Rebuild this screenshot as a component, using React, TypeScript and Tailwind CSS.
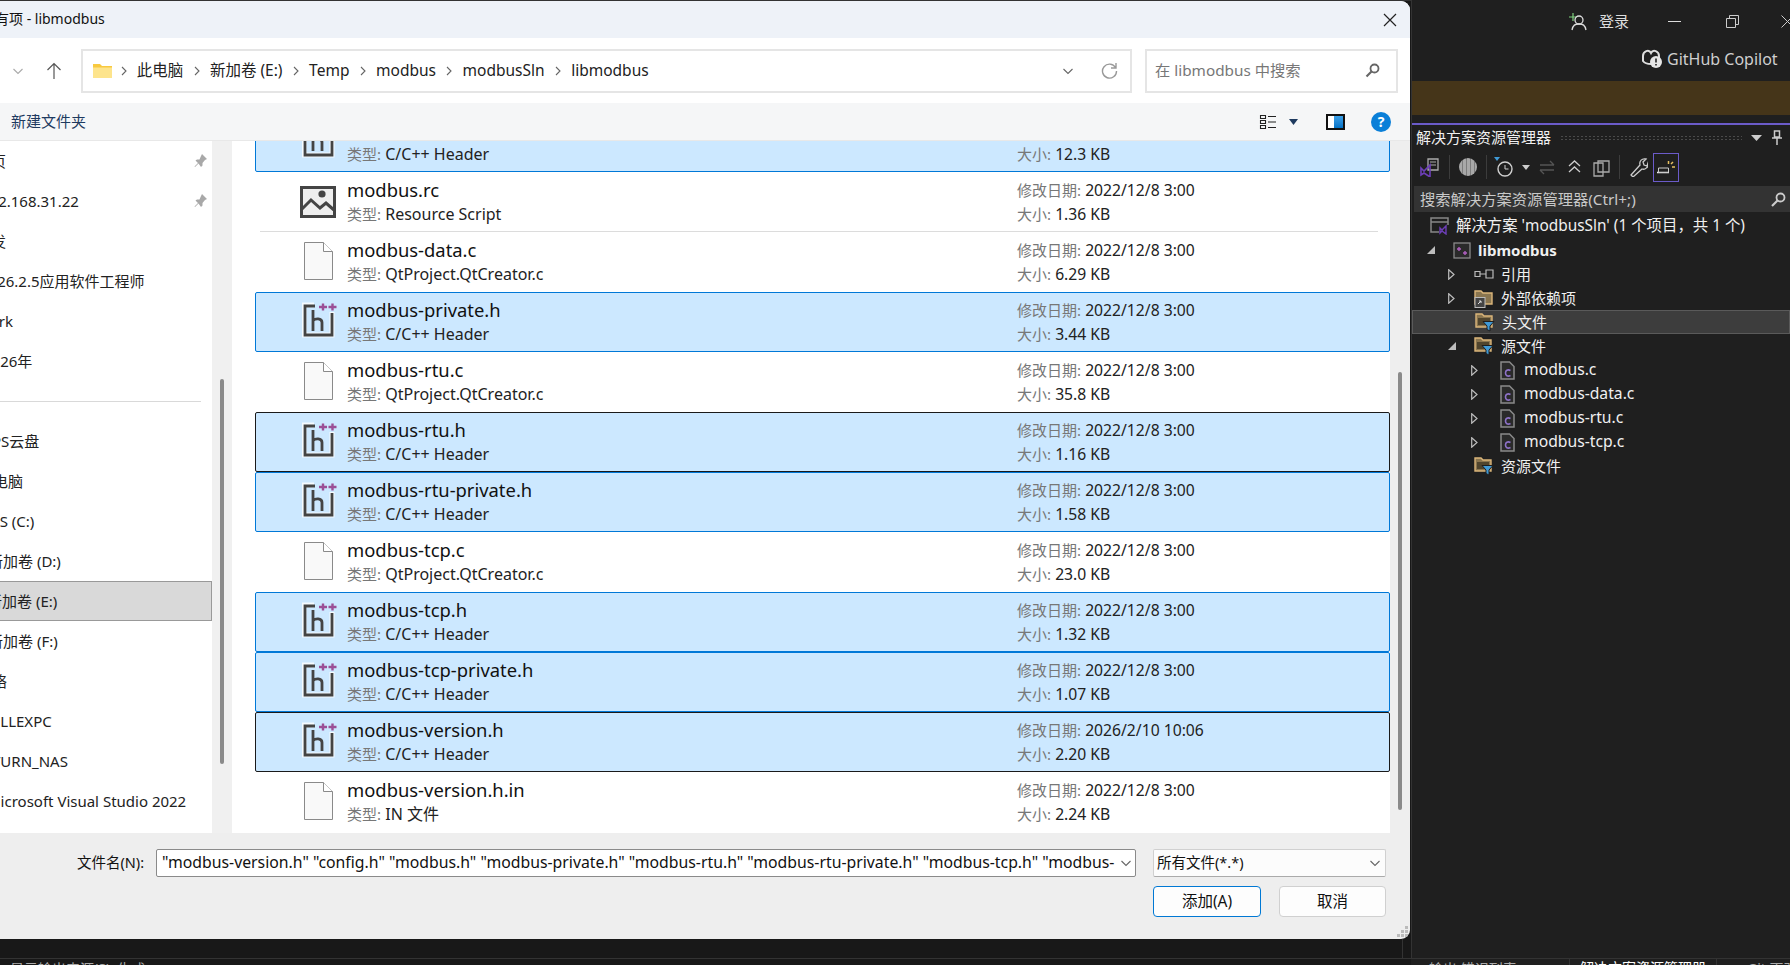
const sans = "font-['Noto_Sans','Noto_Sans_CJK_SC',sans-serif]";

type FileRow = {
  name: string;
  type: string;
  date: string;
  size: string;
  icon: "h" | "doc" | "rc";
  state?: "selected" | "focused";
};

const files: FileRow[] = [
  { name: "modbus.h", type: "C/C++ Header", date: "2022/12/8 3:00", size: "12.3 KB", icon: "h", state: "selected" },
  { name: "modbus.rc", type: "Resource Script", date: "2022/12/8 3:00", size: "1.36 KB", icon: "rc" },
  { name: "modbus-data.c", type: "QtProject.QtCreator.c", date: "2022/12/8 3:00", size: "6.29 KB", icon: "doc" },
  { name: "modbus-private.h", type: "C/C++ Header", date: "2022/12/8 3:00", size: "3.44 KB", icon: "h", state: "selected" },
  { name: "modbus-rtu.c", type: "QtProject.QtCreator.c", date: "2022/12/8 3:00", size: "35.8 KB", icon: "doc" },
  { name: "modbus-rtu.h", type: "C/C++ Header", date: "2022/12/8 3:00", size: "1.16 KB", icon: "h", state: "focused" },
  { name: "modbus-rtu-private.h", type: "C/C++ Header", date: "2022/12/8 3:00", size: "1.58 KB", icon: "h", state: "selected" },
  { name: "modbus-tcp.c", type: "QtProject.QtCreator.c", date: "2022/12/8 3:00", size: "23.0 KB", icon: "doc" },
  { name: "modbus-tcp.h", type: "C/C++ Header", date: "2022/12/8 3:00", size: "1.32 KB", icon: "h", state: "selected" },
  { name: "modbus-tcp-private.h", type: "C/C++ Header", date: "2022/12/8 3:00", size: "1.07 KB", icon: "h", state: "selected" },
  { name: "modbus-version.h", type: "C/C++ Header", date: "2026/2/10 10:06", size: "2.20 KB", icon: "h", state: "focused" },
  { name: "modbus-version.h.in", type: "IN 文件", date: "2022/12/8 3:00", size: "2.24 KB", icon: "doc" },
];

const navTop = [
  { label: "主页", cls: "-ml-[24px]", pin: true },
  { label: "192.168.31.22", cls: "-ml-[19px]", pin: true },
  { label: "开发", cls: "-ml-[24px]" },
  { label: "2026.2.5应用软件工程师", cls: "-ml-[20px]" },
  { label: "Work", cls: "-ml-[24px]" },
  { label: "2026年", cls: "-ml-[17px]" },
];

const navBottom = [
  { label: "WPS云盘", cls: "-ml-[23px]" },
  { label: "此电脑", cls: "-ml-[23px]" },
  { label: "OS (C:)", cls: "-ml-[13px]" },
  { label: "新加卷 (D:)", cls: "-ml-[13px]" },
  { label: "新加卷 (E:)", cls: "-ml-[13px]", active: true },
  { label: "新加卷 (F:)", cls: "-ml-[13px]" },
  { label: "网络", cls: "-ml-[24px]" },
  { label: "DELLEXPC", cls: "-ml-[20px]" },
  { label: "TURN_NAS", cls: "-ml-[9px]" },
  { label: "Microsoft Visual Studio 2022", cls: "-ml-[14px]" },
];

const crumbs = ["此电脑", "新加卷 (E:)", "Temp", "modbus", "modbusSln", "libmodbus"];

const Chevron = ({ dir = "down", color = "#777" }: { dir?: "down" | "right"; color?: string }) => (
  <svg width="12" height="12" viewBox="0 0 12 12" fill="none" stroke={color} strokeWidth="1.1">
    {dir === "down" ? <path d="M1.5 4l4.5 4.5L10.5 4" /> : <path d="M4 2l4 4-4 4" />}
  </svg>
);

const HeaderIcon = () => (
  <svg width="36" height="38" viewBox="0 0 36 38" fill="none" className="ml-[46px] -mt-[4px]">
    <path d="M12 4H2v30h28V11" stroke="#fff" strokeWidth="5" opacity=".8" />
    <path d="M13 5H3v29h27V12" stroke="#444" strokeWidth="2.8" />
    <path d="M11 9v21M11 19.5c2-2 9-3 9 2V30" stroke="#444" strokeWidth="2.8" />
    <path d="M17 6h8M21 2.500v7M26.500 6h8M30.500 2.500v7" stroke="#9b4f96" strokeWidth="2.400" />
  </svg>
);

const DocIcon = () => (
  <svg width="30" height="38" viewBox="0 0 30 38" className="ml-[48px] -mt-[2px]">
    <path d="M.5.5h19l9 9v28H.5z" fill="#f9f9f9" stroke="#8a8a8a" />
    <path d="M19.500.5v9h9" fill="#fff" stroke="#8a8a8a" />
  </svg>
);

const RcIcon = () => (
  <svg width="36" height="32" viewBox="0 0 36 32" className="ml-[44px]">
    <rect x="1.500" y="1.500" width="33" height="29" fill="#eeeeee" stroke="#444" strokeWidth="3" />
    <circle cx="22" cy="8" r="3.600" fill="#444" />
    <path d="M2 23l9-9 9 8 6-5 8 7" fill="none" stroke="#444" strokeWidth="3" />
  </svg>
);

const FileIcon = ({ type }: { type: FileRow["icon"] }) => {
  if (type === "h") return <HeaderIcon />;
  if (type === "rc") return <RcIcon />;
  return <DocIcon />;
};

const Row = ({ file, first }: { file: FileRow; first?: boolean }) => {
  const border =
    file.state === "focused"
      ? "border-[#1a1a1a] bg-[#cce8ff]"
      : file.state === "selected"
        ? "border-[#0078d7] bg-[#cce8ff]"
        : "border-transparent";
  return (
    <div className={`h-[60px] shrink-0 border rounded-[2px] flex items-center ${border} ${first ? "-mt-[29px]" : ""}`}>
      <div className="w-[91px] flex shrink-0">
        <FileIcon type={file.icon} />
      </div>
      <div className="w-[670px] shrink-0 flex flex-col">
        <span className="text-[18.4px] leading-[24px] text-[#111]">{file.name}</span>
        <span className="text-[16px] leading-[24px] text-[#222]">
          <span className="text-[15px] text-[#777]">类型:</span> {file.type}
        </span>
      </div>
      <div className="flex flex-col text-[15.7px] leading-[24px] text-[#222]">
        <span>
          <span className="text-[15px] text-[#777]">修改日期:</span> {file.date}
        </span>
        <span>
          <span className="text-[15px] text-[#777]">大小:</span> {file.size}
        </span>
      </div>
    </div>
  );
};

const Dialog = () => (
  <div className={`w-[1410px] h-[938px] shrink-0 rounded-tr-[9px] rounded-br-[9px] overflow-hidden flex flex-col bg-[#eeeeee] text-[#111] ${sans}`}>
    {/* title bar */}
    <div className="h-[37px] shrink-0 bg-[#eef2f8] flex items-center justify-between pr-[13px] overflow-hidden">
      <span className="-ml-[47px] pb-[2px] text-[14px] whitespace-nowrap">添加现有项 - libmodbus</span>
      <svg width="14" height="14" viewBox="0 0 14 14" stroke="#222" strokeWidth="1.2">
        <path d="M1 1l12 12M13 1L1 13" />
      </svg>
    </div>

    {/* address row */}
    <div className="h-[65px] shrink-0 bg-white flex items-center relative">
      <div className="w-[81px] shrink-0 flex items-center pl-[12px] gap-[22px]">
        <Chevron color="#aaa" />
        <svg width="16" height="18" viewBox="0 0 16 18" fill="none" stroke="#555" strokeWidth="1.2">
          <path d="M8 17V1.5M1.5 8L8 1.5 14.5 8" />
        </svg>
      </div>
      <div className="w-[1051px] h-[44px] shrink-0 border-2 border-[#e5e5e5] flex items-center pl-[10px] pr-[12px]">
        <svg width="19" height="15" viewBox="0 0 19 15" className="shrink-0">
          <path d="M0 1h7l2 2h10v12H0z" fill="#f8c93f" />
          <path d="M0 4.5h19V15H0z" fill="#fde48c" />
        </svg>
        <div className="ml-[5.5px] flex items-center text-[15.5px] text-[#222] whitespace-nowrap">
          {crumbs.map((c) => (
            <div key={c} className="flex items-center">
              <Chevron dir="right" color="#666" />
              <span className="mx-[7.3px]">{c}</span>
            </div>
          ))}
        </div>
        <div className="ml-auto flex items-center gap-[27px]">
          <Chevron color="#666" />
          <svg width="17" height="17" viewBox="0 0 17 17" fill="none" stroke="#999" strokeWidth="1.4">
            <path d="M14.5 5.5A7 7 0 1 0 15.5 9M15 1v5h-5" />
          </svg>
        </div>
      </div>
      <div className="w-[253px] h-[44px] ml-[13px] shrink-0 border-2 border-[#e5e5e5] flex items-center justify-between pl-[8px] pr-[16px]">
        <span className="text-[15.3px] text-[#777]">在 libmodbus 中搜索</span>
        <svg width="15" height="15" viewBox="0 0 15 15" fill="none" stroke="#666" strokeWidth="1.8">
          <circle cx="9.5" cy="5.5" r="4" />
          <path d="M6.5 8.5L1.5 13.5" strokeWidth="2.2" />
        </svg>
      </div>
    </div>

    {/* command row */}
    <div className="h-[38px] shrink-0 bg-[#f5f6f7] border-b border-[#e8e8e8] flex items-center pl-[11px] pr-[19px]">
      <span className="text-[15px] text-[#1e3a5f]">新建文件夹</span>
      <div className="ml-auto flex items-center">
        <svg width="18" height="18" viewBox="0 0 18 18" fill="none" stroke="#222" strokeWidth="1.1">
          <path d="M1.5 2.5h5v3h-5zM1.5 7.5h5v3h-5zM1.5 12.5h5v3h-5zM9 3.5h8M9 9h8M9 14.5h8" />
        </svg>
        <svg width="9" height="6" viewBox="0 0 9 6" className="ml-[12px]">
          <path d="M0 0h9L4.5 6z" fill="#1e3a5f" />
        </svg>
        <div className="ml-[28px] w-[19px] h-[16px] border-2 border-[#111] flex justify-end bg-white">
          <div className="w-[9px] h-full bg-gradient-to-b from-[#3aa0e8] to-[#0072c6]" />
        </div>
        <div className="ml-[26px] w-[20px] h-[20px] rounded-full bg-[#0a7fd8] text-white text-[14px] font-bold flex items-center justify-center">
          ?
        </div>
      </div>
    </div>

    {/* nav + list */}
    <div className="h-[692px] shrink-0 flex bg-white">
      <div className="w-[212px] shrink-0 overflow-hidden text-[15px] text-[#222] whitespace-nowrap">
        {navTop.map((n) => (
          <div key={n.label} className="h-[40px] flex items-center justify-between pr-[5px]">
            <span className={n.cls}>{n.label}</span>
            {n.pin && (
              <svg width="13" height="14" viewBox="0 0 13 14" fill="#a8a8a8">
                <path d="M8 0l5 5-2 1-2.500 3v2.500L7 13 4.500 9.500 1 13l-.5-.5L4 9 1.500 6.500 3 5.500h2.500L7 2z" />
              </svg>
            )}
          </div>
        ))}
        <div className="h-[40px] flex items-center">
          <div className="w-[201px] h-px bg-[#d9d9d9]" />
        </div>
        {navBottom.map((n) => (
          <div
            key={n.label}
            className={`h-[40px] flex items-center border ${n.active ? "bg-[#d9d9d9] border-[#999] border-l-0" : "border-transparent"}`}
          >
            <span className={n.cls}>{n.label}</span>
          </div>
        ))}
      </div>
      <div className="w-[20px] shrink-0 bg-[#f0f0f0] flex justify-center pt-[238px]">
        <div className="w-[4px] h-[385px] rounded-full bg-[#8a8a8a]" />
      </div>
      <div className="w-[23px] shrink-0" />
      <div className="w-[1135px] shrink-0 overflow-hidden flex flex-col">
        <Row file={files[0]} first />
        <Row file={files[1]} />
        <div className="h-0 relative">
          <div className="absolute left-[5px] w-[1118px] top-[-1px] h-px bg-[#dcdcdc]" />
        </div>
        {files.slice(2).map((f) => (
          <Row key={f.name} file={f} />
        ))}
      </div>
      <div className="flex-1 bg-[#eeeeee] flex justify-center pt-[231px]">
        <div className="w-[4px] h-[438px] rounded-full bg-[#8a8a8a]" />
      </div>
    </div>

    {/* footer */}
    <div className="flex-1 flex flex-col pt-[16px] pl-[77px] relative">
      <div className="flex items-center">
        <span className="w-[79px] shrink-0 text-[14.5px]">文件名(N):</span>
        <div className="w-[980px] h-[28px] shrink-0 border border-[#8a8a8a] rounded-[2px] bg-white flex items-center pl-[5px] pr-[3px]">
          <span className="flex-1 overflow-hidden whitespace-nowrap text-[15.8px]">
            "modbus-version.h" "config.h" "modbus.h" "modbus-private.h" "modbus-rtu.h" "modbus-rtu-private.h" "modbus-tcp.h" "modbus-
          </span>
          <Chevron color="#666" />
        </div>
        <div className="w-[233px] h-[28px] ml-[17px] shrink-0 border border-[#d0d0d0] border-b-[#aaa] rounded-[2px] bg-[#fcfcfc] flex items-center justify-between pl-[3px] pr-[4px]">
          <span className="text-[14.5px]">所有文件(*.*)</span>
          <Chevron color="#666" />
        </div>
      </div>
      <div className="flex justify-end gap-[18px] mt-[9px] pr-[24px]">
        <div className="w-[108px] h-[31px] rounded-[4px] border-[1.5px] border-[#0078d4] bg-[#fdfdfd] text-[15.5px] flex items-center justify-center">
          添加(A)
        </div>
        <div className="w-[107px] h-[31px] rounded-[4px] border border-[#d0d0d0] bg-[#fdfdfd] text-[15.5px] flex items-center justify-center">
          取消
        </div>
      </div>
      <svg width="12" height="12" viewBox="0 0 12 12" fill="#bbb" className="absolute right-[1px] bottom-[1px]">
        <path d="M8 0h3v3H8zM4 4h3v3H4zM8 4h3v3H8zM0 8h3v3H0zM4 8h3v3H4zM8 8h3v3H8z" />
      </svg>
    </div>
  </div>
);

const Expander = ({ open, color = "#bdbdbd" }: { open?: boolean; color?: string }) =>
  open ? (
    <svg width="8" height="8" viewBox="0 0 8 8" className="shrink-0">
      <path d="M8 0v8H0z" fill={color} />
    </svg>
  ) : (
    <svg width="7" height="11" viewBox="0 0 7 11" className="shrink-0" fill="none" stroke={color} strokeWidth="1.2">
      <path d="M.7.8l5.300 4.700L.7 10.200z" />
    </svg>
  );

const FilterFolder = () => (
  <svg width="20" height="20" viewBox="0 0 20 20" className="shrink-0">
    <path d="M1 2h6l2 2h8v11H1z" fill="#8a7650" stroke="#dcb67a" strokeWidth="1.400" />
    <path d="M3 6h12v7H3z" fill="#2a2518" opacity=".6" />
    <path d="M8 9.500h11l-4 4.500v5l-3-1.500V14z" fill="#3f9ad6" stroke="#1f1f1f" />
  </svg>
);

const Folder = () => (
  <svg width="20" height="20" viewBox="0 0 20 20" className="shrink-0">
    <path d="M1 3h6l2 2h9v11H1z" fill="#8a7650" stroke="#dcb67a" strokeWidth="1.400" />
    <rect x="1" y="9.500" width="10" height="10" fill="#444" stroke="#bbb" />
    <path d="M4 16l3-3M5 13h2v2" stroke="#ddd" fill="none" />
  </svg>
);

const CFile = () => (
  <svg width="15" height="19" viewBox="0 0 15 19" className="shrink-0">
    <path d="M1 1h8.500L14 5.500V18H1z" fill="#2a2a2a" stroke="#8a8a8a" strokeWidth="1.500" />
    <path d="M10.500 9.500c-3-1.500-5 0-5 2.500s2 4 5 2.500" fill="none" stroke="#8e72c9" strokeWidth="1.600" />
  </svg>
);

const TreeRow = ({ indent, children }: { indent: string; children: React.ReactNode }) => (
  <div className={`h-[24px] flex items-center ${indent}`}>{children}</div>
);

const sourceFiles = ["modbus.c", "modbus-data.c", "modbus-rtu.c", "modbus-tcp.c"];

const ToolIcon = ({ w, children }: { w: number; children: React.ReactNode }) => (
  <svg width={w} height="20" viewBox={`0 0 ${w} 20`} fill="none" className="shrink-0">
    {children}
  </svg>
);

const Explorer = () => (
  <div className={`flex-1 min-w-0 bg-[#1f1f1f] border-l border-[#333] flex flex-col text-[#f0f0f0] ${sans}`}>
    {/* window buttons */}
    <div className="h-[42px] shrink-0 flex items-center pl-[157px] overflow-hidden">
      <svg width="19" height="19" viewBox="0 0 19 19" fill="none" className="shrink-0">
        <path d="M4 1v8M0 5h8" stroke="#7fd17f" strokeWidth="1.200" />
        <circle cx="10" cy="8" r="4" stroke="#ddd" strokeWidth="1.300" />
        <path d="M3 18c1-5 3-6 7-6s6 1 7 6" stroke="#ddd" strokeWidth="1.300" />
      </svg>
      <span className="ml-[11px] shrink-0 whitespace-nowrap text-[15px] text-[#ddd]">登录</span>
      <div className="ml-[39px] w-[13px] h-px bg-[#ddd] shrink-0" />
      <svg width="13" height="13" viewBox="0 0 13 13" fill="none" stroke="#ccc" className="ml-[45px] shrink-0">
        <path d="M.5 3.500h9v9h-9zM3.500 3.500v-3h9v9h-3" />
      </svg>
      <svg width="13" height="13" viewBox="0 0 13 13" stroke="#ccc" className="ml-[42px] shrink-0">
        <path d="M.5.500l12 12M12.500.500l-12 12" />
      </svg>
    </div>
    {/* copilot */}
    <div className="h-[39px] shrink-0 flex items-center pl-[230px] pb-[6px]">
      <svg width="20" height="19" viewBox="0 0 20 19" className="shrink-0">
        <path d="M1 7c0-5 6-7 8-3 2-4 8-2 8 3v5c-3 4-13 4-16 0z" fill="none" stroke="#ddd" strokeWidth="2" />
        <circle cx="14" cy="13" r="6" fill="#e6e6e6" />
        <path d="M14 9.500v4M14 15v1.500" stroke="#222" strokeWidth="1.600" />
      </svg>
      <span className="ml-[5px] text-[16px] text-[#cfcfcf] whitespace-nowrap">GitHub Copilot</span>
    </div>
    <div className="h-[34px] shrink-0 bg-[#453519]" />
    <div className="h-[8px] shrink-0" />
    <div className="h-[2px] shrink-0 bg-[#6b5bc9]" />

    {/* tool window title */}
    <div className="h-[25px] shrink-0 flex items-center pl-[4px] pr-[8px]">
      <span className="text-[15px] whitespace-nowrap">解决方案资源管理器</span>
      <div className="ml-[9px] flex-1 h-[6px] bg-[radial-gradient(#4a4a4a_1px,transparent_1px)] bg-[length:4px_3px]" />
      <svg width="11" height="6" viewBox="0 0 11 6" className="ml-[9px] shrink-0">
        <path d="M0 0h11L5.500 6z" fill="#ccc" />
      </svg>
      <svg width="10" height="15" viewBox="0 0 10 15" stroke="#ccc" fill="none" className="ml-[10px] shrink-0">
        <path d="M2.500 1h5v6h-5zM0 8h10M5 8v7" strokeWidth="1.500" />
      </svg>
    </div>

    {/* toolbar */}
    <div className="h-[34px] shrink-0 flex items-center pl-[8px]">
      <ToolIcon w={20}>
        <path d="M8 2h10v11H8z" stroke="#aaa" strokeWidth="1.300" />
        <path d="M10 5h6M10 8h6" stroke="#aaa" />
        <path d="M1 11l3 3 6-6v12l-6-4-3 2z" stroke="#6d3fb8" strokeWidth="1.600" />
      </ToolIcon>
      <div className="ml-[9px] w-px h-[24px] bg-[#3c3c3c]" />
      <div className="ml-[9px] w-[18px] h-[18px] rounded-full shrink-0 bg-[repeating-linear-gradient(90deg,#a8a8a8_0_3px,#7c7c7c_3px_4px)]" />
      <div className="ml-[9px] w-px h-[24px] bg-[#3c3c3c]" />
      <div className="ml-[7px]">
        <ToolIcon w={20}>
          <path d="M0 0h6L3 4z" fill="#3f9ad6" />
          <circle cx="11" cy="12" r="7" stroke="#d0d0d0" strokeWidth="1.400" />
          <path d="M11 8v4h3.500" stroke="#d0d0d0" />
        </ToolIcon>
      </div>
      <svg width="8" height="5" viewBox="0 0 8 5" className="ml-[8px] shrink-0">
        <path d="M0 0h8L4 5z" fill="#ccc" />
      </svg>
      <div className="ml-[9px]">
        <ToolIcon w={16}>
          <path d="M1 8h14M11 4l4 4M15 13H1M5 17l-4-4" stroke="#555" strokeWidth="1.300" />
        </ToolIcon>
      </div>
      <div className="ml-[13px]">
        <ToolIcon w={13}>
          <path d="M1 9l5.500-5L12 9M1 15l5.500-5L12 15" stroke="#ccc" strokeWidth="1.300" />
        </ToolIcon>
      </div>
      <div className="ml-[12px]">
        <ToolIcon w={17}>
          <path d="M5 4h11v11H5zM1 6h9v13H1z" stroke="#aaa" strokeWidth="1.300" fill="#1f1f1f" />
        </ToolIcon>
      </div>
      <div className="ml-[9px] w-px h-[24px] bg-[#3c3c3c]" />
      <div className="ml-[9px]">
        <ToolIcon w={19}>
          <path d="M2 18l9-10c-1-4 2-7 6-6l-3 3 1 3 3 1 1-3c1 4-3 7-6 6l-9 8z" stroke="#ccc" strokeWidth="1.300" />
        </ToolIcon>
      </div>
      <div className="ml-[5px] w-[26px] h-[29px] border border-[#6b5bc9] flex items-center justify-center shrink-0">
        <svg width="18" height="14" viewBox="0 0 18 14" fill="none">
          <path d="M0 12.500h12" stroke="#eee" strokeWidth="1.500" />
          <path d="M1.500 8h10v4.500h-10z" stroke="#ccc" />
          <path d="M11.500 1v3M15 7h3M14 4l2-2" stroke="#e8c060" strokeWidth="1.500" />
        </svg>
      </div>
    </div>

    {/* search */}
    <div className="h-[26px] mt-[2px] ml-[2px] shrink-0 bg-[#333] flex items-center justify-between pl-[6px] pr-[4px] overflow-hidden">
      <span className="text-[15.3px] text-[#c8c8c8] whitespace-nowrap">搜索解决方案资源管理器(Ctrl+;)</span>
      <svg width="15" height="15" viewBox="0 0 15 15" fill="none" stroke="#ccc" strokeWidth="1.800" className="shrink-0">
        <circle cx="9.500" cy="5.500" r="4" />
        <path d="M6.500 8.500L1 14" strokeWidth="2.200" />
      </svg>
    </div>

    {/* tree */}
    <div className="pt-[2px] text-[15px] whitespace-nowrap">
      <TreeRow indent="pl-[18px]">
        <svg width="20" height="18" viewBox="0 0 20 18" fill="none" className="shrink-0">
          <path d="M9 15H1V1h17v7M1 5h17" stroke="#888" strokeWidth="1.500" />
          <path d="M10 11l2 2 4-4v8l-4-3-2 2z" stroke="#6d3fb8" strokeWidth="1.400" />
        </svg>
        <span className="ml-[6px] text-[15.4px]">解决方案 'modbusSln' (1 个项目，共 1 个)</span>
      </TreeRow>
      <TreeRow indent="pl-[15px]">
        <Expander open />
        <svg width="18" height="17" viewBox="0 0 18 17" fill="none" className="ml-[18px] shrink-0">
          <rect x="1" y="1" width="16" height="15" fill="#2a2a2a" stroke="#8a8a8a" strokeWidth="1.300" />
          <path d="M4 7h4M6 5v4M10 11h4M12 9v4" stroke="#b05fc0" strokeWidth="1.400" />
        </svg>
        <span className="ml-[7px] font-bold">libmodbus</span>
      </TreeRow>
      <TreeRow indent="pl-[36px]">
        <Expander />
        <svg width="20" height="10" viewBox="0 0 20 10" fill="none" stroke="#bbb" strokeWidth="1.200" className="ml-[19px] shrink-0">
          <path d="M1 2.500h5v5H1zM6 5h6M12 1h7v8h-7z" />
        </svg>
        <span className="ml-[7px]">引用</span>
      </TreeRow>
      <TreeRow indent="pl-[36px]">
        <Expander />
        <div className="ml-[19px] flex">
          <Folder />
        </div>
        <span className="ml-[7px]">外部依赖项</span>
      </TreeRow>
      <div className="h-[24px] flex items-center pl-[62px] bg-[#3d3d3d] border border-[#5a5a5a]">
        <FilterFolder />
        <span className="ml-[7px]">头文件</span>
      </div>
      <TreeRow indent="pl-[36px]">
        <Expander open />
        <div className="ml-[18px] flex">
          <FilterFolder />
        </div>
        <span className="ml-[7px]">源文件</span>
      </TreeRow>
      {sourceFiles.map((f) => (
        <TreeRow key={f} indent="pl-[59px]">
          <Expander />
          <div className="ml-[22px] flex">
            <CFile />
          </div>
          <span className="ml-[9px] text-[15.7px]">{f}</span>
        </TreeRow>
      ))}
      <TreeRow indent="pl-[62px]">
        <FilterFolder />
        <span className="ml-[7px]">资源文件</span>
      </TreeRow>
    </div>
  </div>
);

const App = () => (
  <div className="w-[1790px] h-[965px] overflow-hidden bg-[#1f1f1f] flex flex-col">
    <div className="h-[958px] shrink-0 flex">
      <div className="w-[1411px] shrink-0 flex flex-col bg-[#181818]">
        <div className="h-px shrink-0 bg-[#333]" />
        <Dialog />
        <div className="flex-1 border-r border-[#333] w-[1403px]" />
      </div>
      <Explorer />
    </div>
    {/* output tabs, mostly cut off by the window edge */}
    <div className={`h-[7px] shrink-0 border-t border-[#333] bg-[#181818] flex overflow-hidden text-[14px] leading-[20px] text-[#aaa] ${sans}`}>
      <span className="w-[1411px] shrink-0 pl-[10px] whitespace-nowrap">显示输出来源(S): 生成</span>
      <span className="w-[158px] shrink-0 pl-[18px] whitespace-nowrap bg-[#1f1f1f]">输出 错误列表</span>
      <span className="w-[148px] shrink-0 pl-[10px] text-white whitespace-nowrap border-x border-[#333] bg-[#1f1f1f] -mt-px">解决方案资源管理器</span>
      <span className="pl-[30px] whitespace-nowrap bg-[#1f1f1f] flex-1">Git 更改</span>
    </div>
  </div>
);

export default App;
